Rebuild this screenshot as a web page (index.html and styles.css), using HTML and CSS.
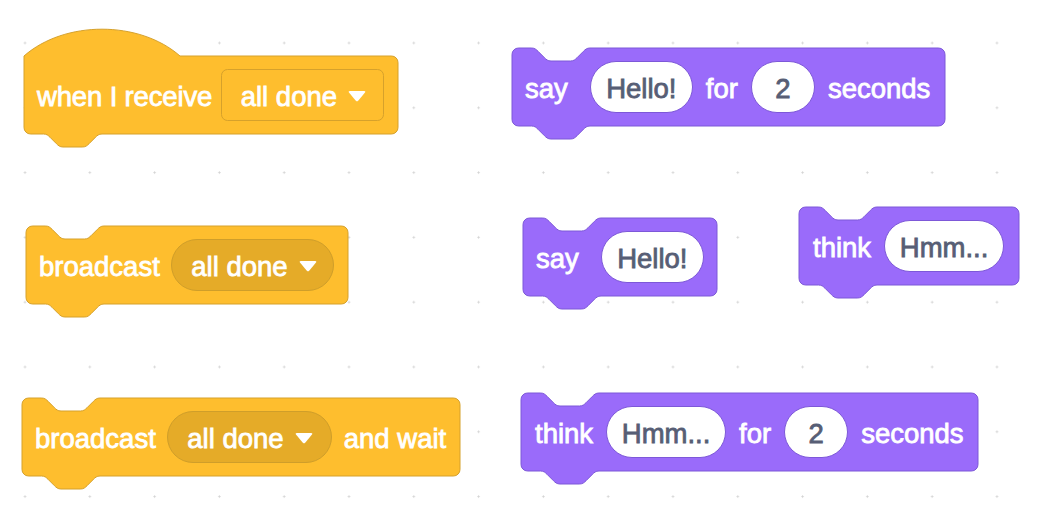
FILE: index.html
```html
<!DOCTYPE html>
<html>
<head>
<meta charset="utf-8">
<link rel="stylesheet" href="styles.css">
</head>
<body>
<div class="workspace">

  <div class="block events b1">
    <svg class="shape" width="374" height="78" viewBox="0 0 374 78" overflow="visible"><path d="M 0,0 c 40.625,-35.75 115.375,-35.75 156,0 H 367.5 A 6.5,6.5 0 0 1 374,6.5 V 71.5 A 6.5,6.5 0 0 1 367.5,78 H 78 c -3.25,0 -4.875,1.625 -6.5,3.25 l -6.5,6.5 c -1.625,1.625 -3.25,3.25 -6.5,3.25 h -19.5 c -3.25,0 -4.875,-1.625 -6.5,-3.25 l -6.5,-6.5 c -1.625,-1.625 -3.25,-3.25 -6.5,-3.25 H 6.5 A 6.5,6.5 0 0 1 0,71.5 Z"/></svg>
    <div class="row">
      <span class="label hat-label">when I receive</span>
      <span class="dropdown rect w163"><span class="dd-text">all done</span><svg class="arrow" width="18" height="11" viewBox="0 0 18 11"><path d="M2,0 H16 Q18.2,0 16.8,1.8 L10.4,9.6 Q9,11.2 7.6,9.6 L1.2,1.8 Q-0.2,0 2,0 Z"/></svg></span>
    </div>
  </div>

  <div class="block events b2">
    <svg class="shape" width="322" height="78" viewBox="0 0 322 78" overflow="visible"><path d="M 0,6.5 A 6.5,6.5 0 0 1 6.5,0 H 19.5 c 3.25,0 4.875,1.625 6.5,3.25 l 6.5,6.5 c 1.625,1.625 3.25,3.25 6.5,3.25 h 19.5 c 3.25,0 4.875,-1.625 6.5,-3.25 l 6.5,-6.5 c 1.625,-1.625 3.25,-3.25 6.5,-3.25 H 315.5 A 6.5,6.5 0 0 1 322,6.5 V 71.5 A 6.5,6.5 0 0 1 315.5,78 H 78 c -3.25,0 -4.875,1.625 -6.5,3.25 l -6.5,6.5 c -1.625,1.625 -3.25,3.25 -6.5,3.25 h -19.5 c -3.25,0 -4.875,-1.625 -6.5,-3.25 l -6.5,-6.5 c -1.625,-1.625 -3.25,-3.25 -6.5,-3.25 H 6.5 A 6.5,6.5 0 0 1 0,71.5 Z"/></svg>
    <div class="row">
      <span class="label">broadcast</span>
      <span class="dropdown round w163"><span class="dd-text">all done</span><svg class="arrow" width="18" height="11" viewBox="0 0 18 11"><path d="M2,0 H16 Q18.2,0 16.8,1.8 L10.4,9.6 Q9,11.2 7.6,9.6 L1.2,1.8 Q-0.2,0 2,0 Z"/></svg></span>
    </div>
  </div>

  <div class="block events b3">
    <svg class="shape" width="438" height="78" viewBox="0 0 438 78" overflow="visible"><path d="M 0,6.5 A 6.5,6.5 0 0 1 6.5,0 H 19.5 c 3.25,0 4.875,1.625 6.5,3.25 l 6.5,6.5 c 1.625,1.625 3.25,3.25 6.5,3.25 h 19.5 c 3.25,0 4.875,-1.625 6.5,-3.25 l 6.5,-6.5 c 1.625,-1.625 3.25,-3.25 6.5,-3.25 H 431.5 A 6.5,6.5 0 0 1 438,6.5 V 71.5 A 6.5,6.5 0 0 1 431.5,78 H 78 c -3.25,0 -4.875,1.625 -6.5,3.25 l -6.5,6.5 c -1.625,1.625 -3.25,3.25 -6.5,3.25 h -19.5 c -3.25,0 -4.875,-1.625 -6.5,-3.25 l -6.5,-6.5 c -1.625,-1.625 -3.25,-3.25 -6.5,-3.25 H 6.5 A 6.5,6.5 0 0 1 0,71.5 Z"/></svg>
    <div class="row">
      <span class="label">broadcast</span>
      <span class="dropdown round w165"><span class="dd-text">all done</span><svg class="arrow" width="18" height="11" viewBox="0 0 18 11"><path d="M2,0 H16 Q18.2,0 16.8,1.8 L10.4,9.6 Q9,11.2 7.6,9.6 L1.2,1.8 Q-0.2,0 2,0 Z"/></svg></span>
      <span class="label">and wait</span>
    </div>
  </div>

  <div class="block looks b4">
    <svg class="shape" width="433" height="78" viewBox="0 0 433 78" overflow="visible"><path d="M 0,6.5 A 6.5,6.5 0 0 1 6.5,0 H 19.5 c 3.25,0 4.875,1.625 6.5,3.25 l 6.5,6.5 c 1.625,1.625 3.25,3.25 6.5,3.25 h 19.5 c 3.25,0 4.875,-1.625 6.5,-3.25 l 6.5,-6.5 c 1.625,-1.625 3.25,-3.25 6.5,-3.25 H 426.5 A 6.5,6.5 0 0 1 433,6.5 V 71.5 A 6.5,6.5 0 0 1 426.5,78 H 78 c -3.25,0 -4.875,1.625 -6.5,3.25 l -6.5,6.5 c -1.625,1.625 -3.25,3.25 -6.5,3.25 h -19.5 c -3.25,0 -4.875,-1.625 -6.5,-3.25 l -6.5,-6.5 c -1.625,-1.625 -3.25,-3.25 -6.5,-3.25 H 6.5 A 6.5,6.5 0 0 1 0,71.5 Z"/></svg>
    <div class="row pad13">
      <span class="label say">say</span>
      <span class="pill w103"><span class="pill-text">Hello!</span></span>
      <span class="label">for</span>
      <span class="pill w64"><span class="pill-text">2</span></span>
      <span class="label">seconds</span>
    </div>
  </div>

  <div class="block looks b5">
    <svg class="shape" width="194" height="78" viewBox="0 0 194 78" overflow="visible"><path d="M 0,6.5 A 6.5,6.5 0 0 1 6.5,0 H 19.5 c 3.25,0 4.875,1.625 6.5,3.25 l 6.5,6.5 c 1.625,1.625 3.25,3.25 6.5,3.25 h 19.5 c 3.25,0 4.875,-1.625 6.5,-3.25 l 6.5,-6.5 c 1.625,-1.625 3.25,-3.25 6.5,-3.25 H 187.5 A 6.5,6.5 0 0 1 194,6.5 V 71.5 A 6.5,6.5 0 0 1 187.5,78 H 78 c -3.25,0 -4.875,1.625 -6.5,3.25 l -6.5,6.5 c -1.625,1.625 -3.25,3.25 -6.5,3.25 h -19.5 c -3.25,0 -4.875,-1.625 -6.5,-3.25 l -6.5,-6.5 c -1.625,-1.625 -3.25,-3.25 -6.5,-3.25 H 6.5 A 6.5,6.5 0 0 1 0,71.5 Z"/></svg>
    <div class="row pad13">
      <span class="label say">say</span>
      <span class="pill w103"><span class="pill-text">Hello!</span></span>
    </div>
  </div>

  <div class="block looks b6">
    <svg class="shape" width="220" height="78" viewBox="0 0 220 78" overflow="visible"><path d="M 0,6.5 A 6.5,6.5 0 0 1 6.5,0 H 19.5 c 3.25,0 4.875,1.625 6.5,3.25 l 6.5,6.5 c 1.625,1.625 3.25,3.25 6.5,3.25 h 19.5 c 3.25,0 4.875,-1.625 6.5,-3.25 l 6.5,-6.5 c 1.625,-1.625 3.25,-3.25 6.5,-3.25 H 213.5 A 6.5,6.5 0 0 1 220,6.5 V 71.5 A 6.5,6.5 0 0 1 213.5,78 H 78 c -3.25,0 -4.875,1.625 -6.5,3.25 l -6.5,6.5 c -1.625,1.625 -3.25,3.25 -6.5,3.25 h -19.5 c -3.25,0 -4.875,-1.625 -6.5,-3.25 l -6.5,-6.5 c -1.625,-1.625 -3.25,-3.25 -6.5,-3.25 H 6.5 A 6.5,6.5 0 0 1 0,71.5 Z"/></svg>
    <div class="row">
      <span class="label">think</span>
      <span class="pill w120"><span class="pill-text">Hmm...</span></span>
    </div>
  </div>

  <div class="block looks b7">
    <svg class="shape" width="457" height="78" viewBox="0 0 457 78" overflow="visible"><path d="M 0,6.5 A 6.5,6.5 0 0 1 6.5,0 H 19.5 c 3.25,0 4.875,1.625 6.5,3.25 l 6.5,6.5 c 1.625,1.625 3.25,3.25 6.5,3.25 h 19.5 c 3.25,0 4.875,-1.625 6.5,-3.25 l 6.5,-6.5 c 1.625,-1.625 3.25,-3.25 6.5,-3.25 H 450.5 A 6.5,6.5 0 0 1 457,6.5 V 71.5 A 6.5,6.5 0 0 1 450.5,78 H 78 c -3.25,0 -4.875,1.625 -6.5,3.25 l -6.5,6.5 c -1.625,1.625 -3.25,3.25 -6.5,3.25 h -19.5 c -3.25,0 -4.875,-1.625 -6.5,-3.25 l -6.5,-6.5 c -1.625,-1.625 -3.25,-3.25 -6.5,-3.25 H 6.5 A 6.5,6.5 0 0 1 0,71.5 Z"/></svg>
    <div class="row">
      <span class="label">think</span>
      <span class="pill w120"><span class="pill-text">Hmm...</span></span>
      <span class="label">for</span>
      <span class="pill w64"><span class="pill-text">2</span></span>
      <span class="label">seconds</span>
    </div>
  </div>

</div>
</body>
</html>
```

FILE: styles.css
```css
html, body {
  margin: 0;
  padding: 0;
  background: #ffffff;
}

.workspace {
  position: relative;
  width: 1038px;
  height: 510px;
  overflow: hidden;
  background-color: #ffffff;
  background-image: radial-gradient(circle at center, #d2d2d2 0px, #d2d2d2 0.8px, rgba(255,255,255,0) 1.4px);
  background-size: 64.8px 64.8px;
  background-position: -7.4px 10.6px;
  font-family: "Liberation Sans", Arial, Helvetica, sans-serif;
}

/* blocks sit at their own place on the free workspace canvas */
.block {
  position: absolute;
  height: 78px;
  display: grid;
}

.b1 { left: 24px; top: 56px; width: 374px; }
.b2 { left: 26px; top: 226px; width: 322px; }
.b3 { left: 22px; top: 398px; width: 438px; }
.b4 { left: 512px; top: 48px; width: 433px; }
.b5 { left: 523px; top: 218px; width: 194px; }
.b6 { left: 799px; top: 207px; width: 220px; }
.b7 { left: 521px; top: 393px; width: 457px; }

.shape,
.row {
  grid-area: 1 / 1;
}

.shape {
  display: block;
  overflow: visible;
}

.shape path {
  stroke-width: 1;
  stroke-linejoin: round;
}

.events .shape path {
  fill: #FEBE2E;
  stroke: #D6A12B;
}

.looks .shape path {
  fill: #9A6BFA;
  stroke: #7D58D8;
}

.row {
  display: flex;
  align-items: center;
  gap: 13px;
  padding-left: 14px;
  height: 78px;
  box-sizing: border-box;
}

.events .row {
  gap: 11.5px;
  padding-left: 13px;
}

.row.pad13 {
  padding-left: 13px;
}

.label,
.dd-text,
.pill-text {
  font-size: 27.5px;
  line-height: 1;
  white-space: nowrap;
  padding-top: 4px;
}

.label {
  color: #ffffff;
  -webkit-text-stroke: 0.8px #ffffff;
}

.label.hat-label {
  margin-right: -3px;
  letter-spacing: -0.15px;
}

.label.say {
  margin-right: 9px;
}

.dropdown {
  height: 52px;
  box-sizing: border-box;
  display: flex;
  align-items: center;
  padding-left: 19px;
  gap: 11px;
  color: #ffffff;
}

.dropdown.rect {
  background: #FEBE2E;
  border: 1px solid #D6A12B;
  border-radius: 6.5px;
}

.dropdown.round {
  background: #E5AB28;
  border: 1px solid #CF9E2A;
  border-radius: 26px;
}

.dd-text {
  -webkit-text-stroke: 0.8px #ffffff;
}

.arrow {
  display: block;
  margin-top: 3px;
}

.arrow path {
  fill: #ffffff;
}

.w163 { width: 163px; }
.w165 { width: 165px; }

.pill {
  height: 52px;
  box-sizing: border-box;
  background: #ffffff;
  border: 1px solid #7D58D8;
  border-radius: 26px;
  display: flex;
  align-items: center;
  justify-content: center;
}

.pill-text {
  color: #575E75;
  -webkit-text-stroke: 0.8px #575E75;
}

.w103 { width: 103px; }
.w64 { width: 64px; }
.w120 { width: 120px; }
```
